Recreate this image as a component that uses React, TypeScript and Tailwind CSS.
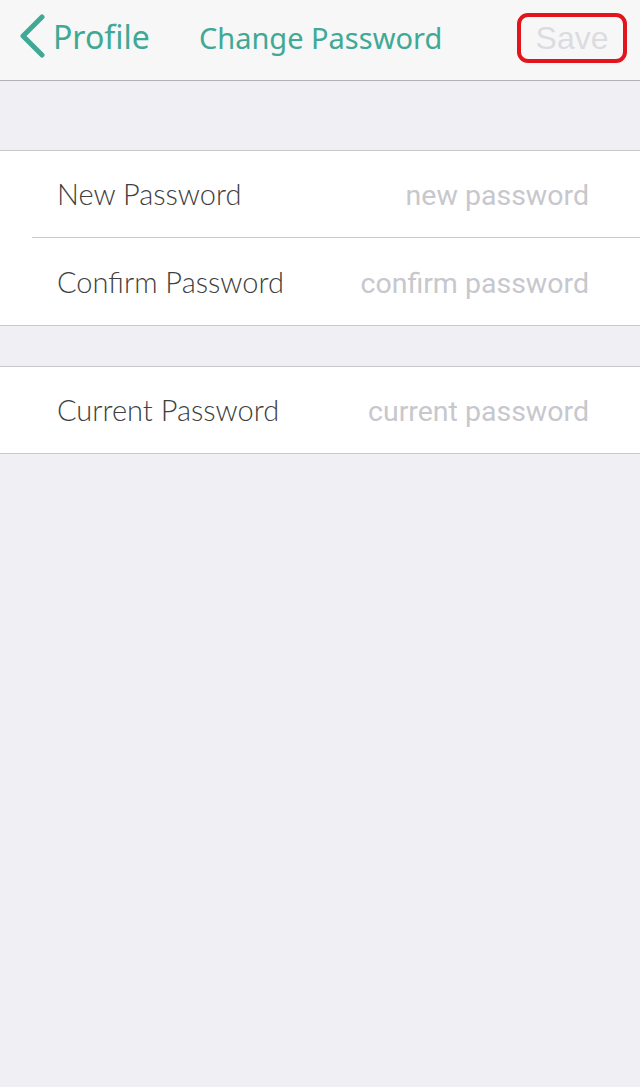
export default function App() {
  const rows1 = [
    { label: "New Password", placeholder: "new password" },
    { label: "Confirm Password", placeholder: "confirm password" },
  ]

  return (
    <div className="min-h-[1087px] w-[640px] bg-[#efeff4] font-['Lato','Noto_Sans',sans-serif]">
      {/* nav bar */}
      <div className="relative flex h-[81px] items-center border-b border-[#b2b2b2] bg-[#f7f7f8] pb-[6px]">
        <div className="flex items-center pl-[18px]">
          <svg width="28" height="44" viewBox="0 0 28 44" className="mt-[-2px]">
            <path d="M24 3 L5 22 L24 41" fill="none" stroke="#3fa995" strokeWidth="5" strokeLinecap="round" strokeLinejoin="round" />
          </svg>
          <span className="ml-[7px] text-[32px] leading-none text-[#3fa995] font-['Noto_Sans',sans-serif]">Profile</span>
        </div>
        <span className="ml-[49px] text-[29px] leading-none text-[#3fa995] font-['Noto_Sans',sans-serif]">Change Password</span>
        <div className="ml-auto mr-[13px] mt-[1px] flex h-[50px] w-[110px] items-center justify-center rounded-[11px] border-[4px] border-[#e2141c]">
          <span className="text-[32px] leading-none text-[#dcdce0] font-['Liberation_Sans',sans-serif]">Save</span>
        </div>
      </div>

      <div className="h-[69px]" />

      <div className="border-y border-[#c8c7cc] bg-white">
        {rows1.map((r, i) => (
          <div key={r.label} className={i > 0 ? "pl-[32px]" : ""}>
            <div className={`flex items-center pr-[51px] ${i > 0 ? "h-[88px] border-t border-[#c8c7cc] pl-[25px]" : "h-[86px] pl-[57px]"}`}>
              <span className="text-[29px] font-light text-[#404040]">{r.label}</span>
              <span className="ml-auto mt-[5px] text-[28.5px] text-[#c7c7cd] font-['Roboto',sans-serif]">{r.placeholder}</span>
            </div>
          </div>
        ))}
      </div>

      <div className="h-[40px]" />

      <div className="border-y border-[#c8c7cc] bg-white">
        <div className="flex h-[86px] items-center pl-[57px] pr-[51px]">
          <span className="text-[29px] font-light text-[#404040]">Current Password</span>
          <span className="ml-auto mt-[5px] text-[28.5px] text-[#c7c7cd] font-['Roboto',sans-serif]">current password</span>
        </div>
      </div>
    </div>
  )
}
